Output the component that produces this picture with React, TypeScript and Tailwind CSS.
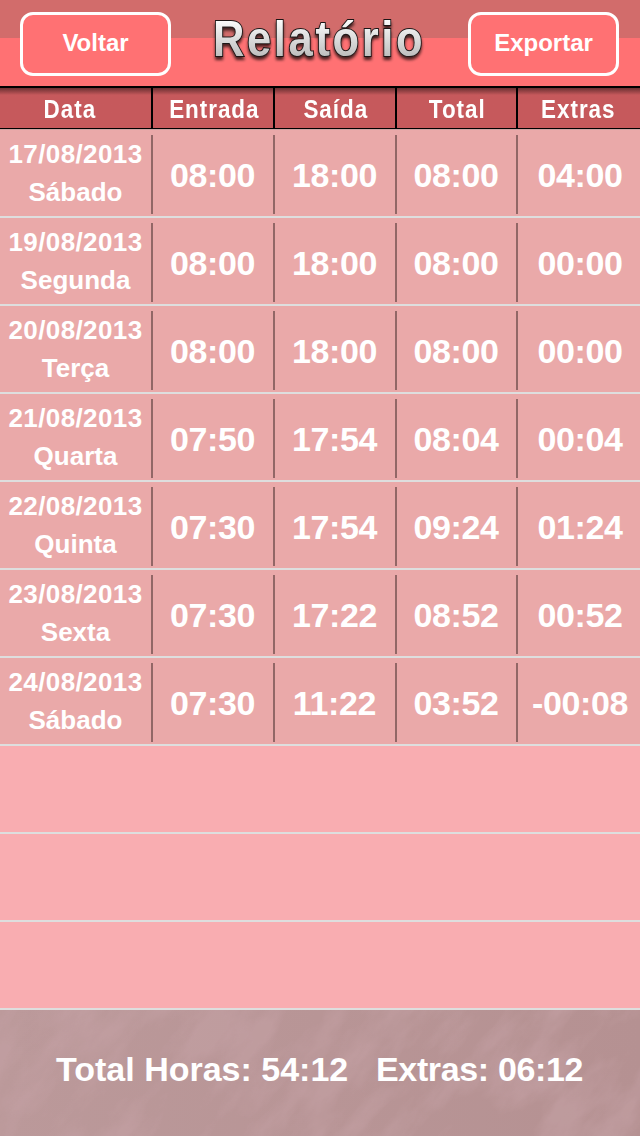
const columns = [
  { label: "Data", pad: "pr-[11px]" },
  { label: "Entrada", pad: "pl-0.5" },
  { label: "Saída", pad: "pl-0.5" },
  { label: "Total", pad: "pl-0.5" },
  { label: "Extras", pad: "pr-px" },
];

const rows = [
  { date: "17/08/2013", day: "Sábado", hours: ["08:00", "18:00", "08:00", "04:00"] },
  { date: "19/08/2013", day: "Segunda", hours: ["08:00", "18:00", "08:00", "00:00"] },
  { date: "20/08/2013", day: "Terça", hours: ["08:00", "18:00", "08:00", "00:00"] },
  { date: "21/08/2013", day: "Quarta", hours: ["07:50", "17:54", "08:04", "00:04"] },
  { date: "22/08/2013", day: "Quinta", hours: ["07:30", "17:54", "09:24", "01:24"] },
  { date: "23/08/2013", day: "Sexta", hours: ["07:30", "17:22", "08:52", "00:52"] },
  { date: "24/08/2013", day: "Sábado", hours: ["07:30", "11:22", "03:52", "-00:08"] },
];

const grid = "grid grid-cols-[153px_122px_122px_121px_122px]";

const HeaderButton = ({ children }: { children: string }) => (
  <button className="flex h-16 w-[151px] items-center justify-center rounded-[13px] border-3 border-white bg-[#ff7173] pb-0.5 text-[24px] font-bold text-white">
    {children}
  </button>
);

const Title = () => (
  <h1 className="h-[86px] w-[230px]">
    <svg width="230" height="86" viewBox="0 0 230 86">
      <defs>
        <linearGradient id="silver" gradientUnits="userSpaceOnUse" x1="0" y1="18" x2="0" y2="57">
          <stop offset="0" stopColor="#ffffff" />
          <stop offset="1" stopColor="#bdbdbd" />
        </linearGradient>
        <filter id="shadow" x="-10%" y="-20%" width="120%" height="150%">
          <feDropShadow dx="0" dy="3" stdDeviation="1.8" floodColor="#000" floodOpacity="0.7" />
        </filter>
      </defs>
      <g transform="translate(8 0) scale(0.87 1)">
        <text
          x="0"
          y="56"
          textLength="241"
          lengthAdjust="spacing"
          fontSize="50"
          fill="url(#silver)"
          stroke="#1c1717"
          strokeWidth="2"
          paintOrder="stroke"
          filter="url(#shadow)"
          className="font-['Liberation_Sans',Arial,sans-serif] font-bold"
        >
          Relatório
        </text>
      </g>
    </svg>
  </h1>
);

const App = () => {
  return (
    <main className="flex h-[1136px] w-[640px] flex-col overflow-hidden bg-[#f9adb1] font-['Liberation_Sans',Arial,sans-serif] text-white">
      <header className="flex h-[88px] shrink-0 items-start justify-between border-b-2 border-black bg-linear-to-b from-[#d26c6b] from-[38px] to-[#ff7173] to-[38px] px-5">
        <div className="pt-3">
          <HeaderButton>Voltar</HeaderButton>
        </div>
        <Title />
        <div className="pr-px pt-3">
          <HeaderButton>Exportar</HeaderButton>
        </div>
      </header>

      {/* Column titles */}
      <div className={`${grid} h-[41px] shrink-0 border-b border-black bg-[#c6595c] bg-linear-to-b from-[#6d3032] to-[#c6595c] to-[7px]`}>
        {columns.map(({ label, pad }) => (
          <div
            key={label}
            className={`flex items-center justify-center border-r-2 border-black text-[25.5px] font-bold last:border-r-0 ${pad}`}
          >
            <span className="scale-x-[0.88] pt-0.5 tracking-[1.1px]">{label}</span>
          </div>
        ))}
      </div>

      {rows.map((row, i) => (
        <div
          key={row.date}
          className={`${grid} shrink-0 border-b-2 border-[#dedede] bg-[#eaa9a9] pb-0.5 ${i === 0 ? "h-[89px] pt-1.5 shadow-[inset_0_1px_0_#cfa3a3]" : "h-[88px] pt-[5px]"}`}
        >
          <div className="flex flex-col items-center border-r-2 border-[#926766] text-[26px] leading-[38px] font-bold">
            <span className="tracking-[0.4px]">{row.date}</span>
            <span>{row.day}</span>
          </div>
          {row.hours.map((hour, j) => (
            <div
              key={j}
              className="flex items-center justify-center border-r-2 border-[#926766] pt-0.5 pr-px text-[34px] font-bold tracking-[-0.35px] last:border-r-0 last:pr-0 last:pl-0.5"
            >
              {hour}
            </div>
          ))}
        </div>
      ))}

      {/* Empty rows */}
      {[0, 1, 2].map((n) => (
        <div key={n} className="h-[88px] shrink-0 border-b-2 border-[#dedede]" />
      ))}

      <footer className="relative flex h-[126px] shrink-0 items-center overflow-hidden bg-linear-to-r from-[#bb999a] to-[#b59192] pb-2 pl-14 text-[34px] font-bold">
        {/* Brushed texture */}
        <svg className="absolute inset-0 opacity-60" width="640" height="126">
          <filter id="brush" x="0" y="0" width="100%" height="100%" colorInterpolationFilters="sRGB">
            <feTurbulence type="fractalNoise" baseFrequency="0.012 0.03" numOctaves="7" seed="8" />
            <feColorMatrix values="0 0 0 0 0.77  0 0 0 0 0.63  0 0 0 0 0.645  3 0 0 0 -1.2" />
          </filter>
          <rect x="-200" y="-400" width="1040" height="900" filter="url(#brush)" transform="rotate(-50 320 63)" />
        </svg>
        <span className="relative w-80">Total Horas: 54:12</span>
        <span className="relative tracking-[-0.35px]">Extras: 06:12</span>
      </footer>
    </main>
  );
};

export default App;
